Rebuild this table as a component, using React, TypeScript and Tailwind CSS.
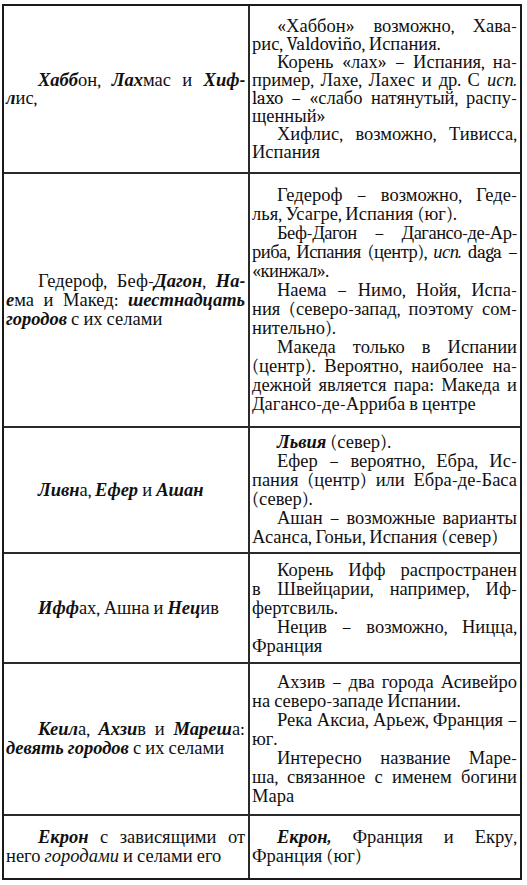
import type { ReactNode } from "react";

function BI({ children }: { children: ReactNode }) {
  return <span className="font-bold italic">{children}</span>;
}

function I({ children }: { children: ReactNode }) {
  return <span className="italic">{children}</span>;
}

// one typeset line; j = justified (not the last line of a paragraph), first = paragraph indent
function L({ children, j, first, left, tight }: { children: ReactNode; j?: boolean; first?: boolean; left?: boolean; tight?: boolean }) {
  const cls = [
    "whitespace-nowrap",
    j ? "text-justify [text-align-last:justify]" : "text-left",
    first ? (left ? "indent-[32px]" : "indent-[25px]") : "",
    tight ? "tracking-[-0.5px]" : "",
  ].join(" ");
  return <div className={cls}>{children}</div>;
}

function Row({ h, last, lead, left, right }: { h: string; last?: boolean; lead: string; left: ReactNode; right: ReactNode }) {
  return (
    <div className={`grid grid-cols-[246px_1fr] ${h} ${last ? "" : "border-b-2 border-[#2a2a2a]"} ${lead}`}>
      <div className="flex flex-col justify-center border-r-2 border-[#2a2a2a] pl-[2px] pr-[3px]">{left}</div>
      <div className="flex flex-col justify-center pl-[2px] pr-[3px]">{right}</div>
    </div>
  );
}

export default function App() {
  return (
    <div className="min-h-screen bg-white pl-[2px] pt-[4px] font-serif text-[18.5px] text-[#111]">
      <div className="w-[520px] border-2 border-[#1a1a1a]">
        <Row
          h="h-[168px]"
          lead="leading-[18px]"
          left={
            <>
              <L j first left>
                <BI>Хабб</BI>он, <BI>Лах</BI>мас и <BI>Хиф-</BI>
              </L>
              <L>
                <BI>л</BI>ис,
              </L>
            </>
          }
          right={
            <>
              <L j first>«Хаббон» возможно, Хава-</L>
              <L>рис, Valdoviño, Испания.</L>
              <L j first>Корень «лах» – Испания, на-</L>
              <L j>
                пример, Лахе, Лахес и др. С <I>исп.</I>
              </L>
              <L j>laxo – «слабо натянутый, распу-</L>
              <L>щенный»</L>
              <L j first>Хифлис, возможно, Тивисса,</L>
              <L>Испания</L>
            </>
          }
        />
        <Row
          h="h-[254px]"
          lead="leading-[19px]"
          left={
            <>
              <L j first left>
                Гедероф, Беф-<BI>Дагон</BI>, <BI>На-</BI>
              </L>
              <L j>
                <BI>е</BI>ма и Макед: <BI>шестнадцать</BI>
              </L>
              <L>
                <BI>городов</BI> с их селами
              </L>
            </>
          }
          right={
            <>
              <L j first>Гедероф – возможно, Геде-</L>
              <L>лья, Усагре, Испания (юг).</L>
              <L j first tight>Беф-Дагон – Дагансо-де-Ар-</L>
              <L j tight>
                риба, Испания (центр), <I>исп.</I> daga –
              </L>
              <L tight>«кинжал».</L>
              <L j first>Наема – Нимо, Нойя, Испа-</L>
              <L j>ния (северо-запад, поэтому сом-</L>
              <L>нительно).</L>
              <L j first>Македа только в Испании</L>
              <L j>(центр). Вероятно, наиболее на-</L>
              <L j>дежной является пара: Македа и</L>
              <L>Дагансо-де-Арриба в центре</L>
            </>
          }
        />
        <Row
          h="h-[126px]"
          lead="leading-[19px]"
          left={
            <L first left>
              <BI>Ливн</BI>а, <BI>Ефер</BI> и <BI>Ашан</BI>
            </L>
          }
          right={
            <>
              <L first>
                <BI>Львия</BI> (север).
              </L>
              <L j first>Ефер – вероятно, Ебра, Ис-</L>
              <L j>пания (центр) или Ебра-де-Баса</L>
              <L>(север).</L>
              <L j first>Ашан – возможные варианты</L>
              <L>Асанса, Гоньи, Испания (север)</L>
            </>
          }
        />
        <Row
          h="h-[110px]"
          lead="leading-[19px]"
          left={
            <L first left>
              <BI>Ифф</BI>ах, Ашна и <BI>Нец</BI>ив
            </L>
          }
          right={
            <>
              <L j first>Корень Ифф распространен</L>
              <L j>в Швейцарии, например, Иф-</L>
              <L>фертсвиль.</L>
              <L j first>Нецив – возможно, Ницца,</L>
              <L>Франция</L>
            </>
          }
        />
        <Row
          h="h-[152px]"
          lead="leading-[19px]"
          left={
            <>
              <L j first left>
                <BI>Кеил</BI>а, <BI>Ахзи</BI>в и <BI>Мареш</BI>а:
              </L>
              <L>
                <BI>девять городов</BI> с их селами
              </L>
            </>
          }
          right={
            <>
              <L j first>Ахзив – два города Асивейро</L>
              <L>на северо-западе Испании.</L>
              <L j first>Река Аксиа, Арьеж, Франция –</L>
              <L>юг.</L>
              <L j first>Интересно название Маре-</L>
              <L j>ша, связанное с именем богини</L>
              <L>Мара</L>
            </>
          }
        />
        <Row
          h="h-[62px]"
          last
          lead="leading-[19px]"
          left={
            <>
              <L j first left>
                <BI>Екрон</BI> с зависящими от
              </L>
              <L>
                него <I>городами</I> и селами его
              </L>
            </>
          }
          right={
            <>
              <L j first>
                <BI>Екрон,</BI> Франция и Екру,
              </L>
              <L>Франция (юг)</L>
            </>
          }
        />
      </div>
    </div>
  );
}
